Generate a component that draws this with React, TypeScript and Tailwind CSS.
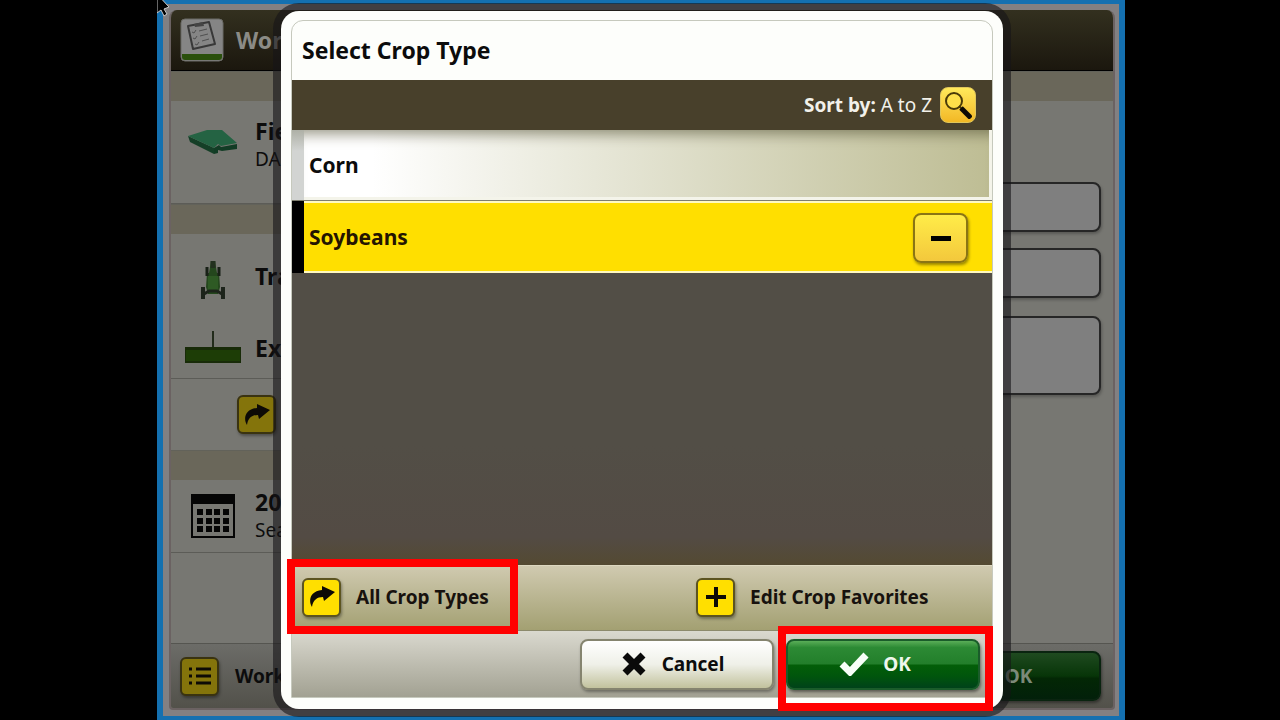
import type { ReactNode } from "react";

const PointerIcon = () => (
  <svg viewBox="0 0 14 18" className="w-[14px] h-[18px]" aria-hidden="true">
    <path d="M0 -6L12 7L7 9L10 14L7 16L4 10L0 13Z" fill="#000" stroke="#c9c9c9" strokeWidth="1" />
  </svg>
);

const ClipboardIcon = () => (
  <svg viewBox="0 0 44 44" className="w-11 h-11 shrink-0" aria-hidden="true">
    <rect x="1" y="1" width="42" height="42" rx="4" fill="#858585" stroke="#6b6b66" />
    <path d="M2 36H42V39a3 3 0 0 1-3 3H5a3 3 0 0 1-3-3Z" fill="#2a500c" />
    <path d="M8 8L29 4L35 26L13 31Z" fill="#858585" stroke="#383838" strokeWidth="2" strokeLinejoin="round" />
    <path d="M14 6L23 4L24 8L15 9Z" fill="#444" />
    <path d="M12 14l2 1 2-3M19 13l8-2M13 20l2 1 2-3M20 18l8-2M15 26l2 1 2-3M22 23l7-2" fill="none" stroke="#505050" strokeWidth="1" />
  </svg>
);

const FieldIcon = () => (
  <svg viewBox="0 0 50 26" className="w-[50px] h-[26px]" aria-hidden="true">
    <path d="M0 7L26 19V25L2 13Z" fill="#153f27" />
    <path d="M26 19L31 16L33 18L49 15V20L34 22L30 21V24L26 25Z" fill="#123c25" />
    <path d="M0 7L19 1H34L49 14L33 17L30 15L26 19Z" fill="#246343" />
  </svg>
);

const TractorIcon = () => (
  <svg viewBox="0 0 26 40" className="w-[26px] h-10" aria-hidden="true">
    <path d="M11 1h4l2 12h2l1 14-2 7H8l-2-7 1-14h2Z" fill="#24471d" />
    <path d="M13 1v7" stroke="#22301e" strokeWidth="5" />
    <path d="M7 7v9M19 7v9" stroke="#182116" strokeWidth="3" />
    <path d="M8 16h10v14H8Z" fill="#2e5a24" />
    <path d="M3 27v12M23 27v12" stroke="#1d241b" strokeWidth="4" />
    <path d="M4 34L9 31H17L22 34" fill="none" stroke="#1d241b" strokeWidth="3" />
  </svg>
);

const ImplementIcon = () => (
  <svg viewBox="0 0 56 34" className="w-14 h-[34px]" aria-hidden="true">
    <path d="M28 0V17" stroke="#222b1b" strokeWidth="2" />
    <path d="M0 16H56V32H0Z" fill="#182b08" />
    <path d="M1 19H55V30H1Z" fill="#1d3d06" />
  </svg>
);

const CalendarIcon = () => (
  <svg viewBox="0 0 44 44" className="w-11 h-11" aria-hidden="true">
    <path d="M1 1H43V43H1Z" fill="#777772" stroke="#050505" strokeWidth="2" />
    <path d="M0 0H44V10H0Z" fill="#050505" />
    <path
      d="M6 15h6v6H6zM15 15h6v6h-6zM23 15h6v6h-6zM32 15h6v6h-6zM6 24h6v6H6zM15 24h6v6h-6zM23 24h6v6h-6zM32 24h6v6h-6zM6 32h6v6H6zM15 32h6v6h-6zM23 32h6v6h-6zM32 32h6v6h-6z"
      fill="#050505"
    />
  </svg>
);

const ArrowIcon = () => (
  <svg viewBox="0 0 26 22" className="w-[26px] h-[22px]" aria-hidden="true">
    <path d="M13 0L26 6L15 15L14 11C8 11 4 14 3 21C-1 15 1 5 13 4Z" fill="#0d0a06" />
  </svg>
);

const ListIcon = () => (
  <svg viewBox="0 0 22 18" className="w-[22px] h-[18px]" aria-hidden="true">
    <path d="M7 2H22M7 9H22M7 16H22" stroke="#0d0a06" strokeWidth="3" />
    <path d="M0 2H3M0 9H3M0 16H3" stroke="#0d0a06" strokeWidth="3" />
  </svg>
);

const SearchIcon = () => (
  <svg viewBox="0 0 28 28" className="w-7 h-7" aria-hidden="true">
    <circle cx="10" cy="10" r="8" fill="#ffe04a" stroke="#4a3a08" strokeWidth="2" />
    <path d="M15 15L18 18" stroke="#4a3a08" strokeWidth="2" />
    <path d="M17 17L27 27" stroke="#0d0a06" strokeWidth="5" />
  </svg>
);

const PlusIcon = () => (
  <svg viewBox="0 0 20 20" className="w-5 h-5" aria-hidden="true">
    <path d="M10 0V20M0 10H20" stroke="#0d0a06" strokeWidth="4" />
  </svg>
);

const CrossIcon = () => (
  <svg viewBox="0 0 24 24" className="w-6 h-6" aria-hidden="true">
    <path d="M3 3L21 21M21 3L3 21" stroke="#0a0a0a" strokeWidth="7" />
  </svg>
);

const CheckIcon = () => (
  <svg viewBox="0 0 30 24" className="w-[30px] h-6" aria-hidden="true">
    <path d="M3 12L11 20L27 3" fill="none" stroke="#f8fff8" strokeWidth="7" />
  </svg>
);

const YellowTile = ({ children }: { children: ReactNode }) => (
  <span className="flex h-[39px] w-[39px] shrink-0 items-center justify-center rounded-md border-2 border-[#5c5420] bg-[#ffdf00] shadow-[1px_2px_3px_rgba(0,0,0,0.35)]">
    {children}
  </span>
);

const DimTile = ({ children }: { children: ReactNode }) => (
  <span className="flex h-[39px] w-[39px] shrink-0 items-center justify-center rounded-md border-2 border-[#3a3310] bg-[#84740b] shadow-[1px_2px_3px_rgba(0,0,0,0.35)]">
    {children}
  </span>
);

const SectionStrip = () => (
  <div className="h-[30px] shrink-0 border-t border-[#62625a] bg-[#6a675a]" />
);

// Setup page that stays visible, dimmed, behind the dialog
const SetupPage = () => (
  <div className="flex flex-1 flex-col overflow-hidden rounded-t-lg rounded-b border-x-2 border-b-2 border-[#6b6262] bg-[#777772]">
    <header className="flex h-[61px] shrink-0 items-center gap-3 border-b border-black bg-linear-to-b from-[#33301f] to-[#1b170e] px-[9px]">
      <ClipboardIcon />
      <h1 className="text-[23px] font-bold text-[#8b8b86]">Work</h1>
    </header>

    <div className="flex flex-1">
      <div className="flex w-1/3 flex-col">
        <SectionStrip />
        <div className="flex h-[103px] items-start border-b border-[#5c5c57] pt-4">
          <div className="flex w-[84px] justify-center pt-3">
            <FieldIcon />
          </div>
          <div>
            <p className="text-[23px] leading-7 font-bold">Field</p>
            <p className="text-[19px] leading-7">DAK</p>
          </div>
        </div>
        <SectionStrip />
        <div className="flex h-[72px] items-center pt-3">
          <div className="flex w-[84px] justify-center pt-2">
            <TractorIcon />
          </div>
          <p className="text-[23px] font-bold">Tractor</p>
        </div>
        <div className="flex h-[73px] items-center border-b border-[#5c5c57] pt-3">
          <div className="flex w-[84px] justify-center">
            <ImplementIcon />
          </div>
          <p className="text-[23px] font-bold">Exact</p>
        </div>
        <div className="flex h-[71px] items-center pl-[66px]">
          <DimTile>
            <ArrowIcon />
          </DimTile>
        </div>
        <SectionStrip />
        <div className="flex h-[73px] items-center border-b border-[#5c5c57]">
          <div className="flex w-[84px] justify-center">
            <CalendarIcon />
          </div>
          <div>
            <p className="text-[23px] leading-7 font-bold">20</p>
            <p className="text-[19px] leading-7">Sea</p>
          </div>
        </div>
      </div>

      <div className="flex flex-1 flex-col">
        <SectionStrip />
        <div className="flex flex-col gap-4 pt-[81px] pr-3">
          <button type="button" aria-label="Crop" className="h-[50px] rounded-lg border-2 border-[#262626] bg-[#7f7f7f] shadow-[1px_2px_3px_rgba(0,0,0,0.25)]" />
          <button type="button" aria-label="Variety" className="h-[50px] rounded-lg border-2 border-[#262626] bg-[#7f7f7f] shadow-[1px_2px_3px_rgba(0,0,0,0.25)]" />
          <button type="button" aria-label="Details" className="mt-0.5 h-[79px] rounded-lg border-2 border-[#262626] bg-[#7f7f7f] shadow-[1px_2px_3px_rgba(0,0,0,0.25)]" />
        </div>
      </div>
    </div>

    <footer className="flex h-[65px] shrink-0 items-center justify-between border-t border-[#555550] bg-linear-to-b from-[#6c6c68] to-[#52514a] pr-3 pl-[9px]">
      <button type="button" className="flex items-center gap-4">
        <DimTile>
          <ListIcon />
        </DimTile>
        <span className="text-[19px] font-bold">Work</span>
      </button>
      <button
        type="button"
        className="flex h-[50px] w-[193px] items-center justify-center rounded-lg border-2 border-[#0a2410] bg-[linear-gradient(#1f4a20,#073508_50%,#032705_55%,#02200a)] pl-7 text-[19px] font-bold text-[#7c8a7a] shadow-[1px_2px_3px_rgba(0,0,0,0.4)]"
      >
        OK
      </button>
    </footer>
  </div>
);

const CropTypeDialog = () => (
  <div
    role="dialog"
    aria-labelledby="dialog-title"
    className="flex flex-1 flex-col rounded-[18px] bg-[#fdfefb] px-[10px] pt-[9px] pb-[11px] shadow-[0_0_0_8px_rgba(22,20,24,0.6)]"
  >
    <div className="flex flex-1 flex-col rounded-t-xl border border-[#c6c9bd]">
      <h2 id="dialog-title" className="flex h-[59px] items-center pl-[10px] text-[23px] font-bold">
        Select Crop Type
      </h2>

      <div className="flex h-[50px] items-center justify-end gap-2 bg-[#48402b] pr-4 text-[#f2f1ea]">
        <p className="text-[19px]">
          <span className="font-bold">Sort by:</span> A to Z
        </p>
        <button
          type="button"
          aria-label="Search"
          className="flex h-[36px] w-[36px] items-center justify-center rounded-lg border border-[#e0c65a] bg-linear-to-b from-[#ffe95a] to-[#f2b824]"
        >
          <SearchIcon />
        </button>
      </div>

      <ul className="text-[21px] font-bold">
        <li className="flex h-[71px] border-b border-[#7d7d6e]">
          <span className="w-3 bg-linear-to-b from-[#aeb0a6] to-[#d2d4d2] to-30%" />
          <button
            type="button"
            className="flex flex-1 items-center border-r-3 border-b-3 border-[#f4f4ea] bg-linear-to-r from-white from-10% to-[#bebd94] pt-1 pl-[5px] shadow-[inset_0_16px_14px_-12px_rgba(80,78,50,0.6)]"
          >
            Corn
          </button>
        </li>
        <li className="flex h-[72px]">
          <span className="w-3 bg-black" />
          <div className="flex flex-1 items-center justify-between border-y-2 border-[#fff9c0] bg-[#ffdf00] pt-0.5 pr-6 pl-[5px] text-[#241500]">
            <span>Soybeans</span>
            <button
              type="button"
              aria-label="Remove Soybeans"
              className="flex h-[50px] w-[55px] items-center justify-center rounded-lg border-2 border-[#8a7514] bg-linear-to-b from-[#ffec48] to-[#f3c83c] shadow-[1px_2px_3px_rgba(0,0,0,0.4)]"
            >
              <span className="h-[5px] w-5 bg-black" />
            </button>
          </div>
        </li>
      </ul>

      <div className="flex-1 bg-[linear-gradient(to_top,#544a32,#534b44_28px,#524e46_120px)]" />

      <div className="flex h-[66px] items-center border-t border-[#ddd8c0] border-b border-b-[#8c8a6c] bg-linear-to-b from-[#d0cab0] to-[#a3a072] pb-0.5 text-[19px] font-bold text-[#17120e]">
        <button type="button" className="relative flex w-[394px] items-center gap-[15px] pl-[10px]">
          <YellowTile>
            <ArrowIcon />
          </YellowTile>
          All Crop Types
          <span className="pointer-events-none absolute -top-[19px] -left-[5px] z-10 h-[75px] w-[231px] border-8 border-[#ff0000]" />
        </button>
        <button type="button" className="flex items-center gap-[15px] pl-[10px]">
          <YellowTile>
            <PlusIcon />
          </YellowTile>
          Edit Crop Favorites
        </button>
      </div>

      <div className="flex h-[66px] items-center justify-end gap-3 bg-linear-to-b from-[#dad9cf] to-[#a2a192] pr-3 text-[19px] font-bold">
        <button
          type="button"
          className="flex h-[51px] w-[194px] items-center justify-center gap-4 rounded-lg border-2 border-[#85846f] bg-linear-to-b from-white via-[#eff0e8] to-[#c2c29d] pr-2 shadow-[1px_2px_3px_rgba(0,0,0,0.35)]"
        >
          <CrossIcon />
          Cancel
        </button>
        <button
          type="button"
          className="relative flex h-[51px] w-[194px] items-center justify-center gap-[14px] rounded-lg border-2 border-[#1a5c2a] bg-[linear-gradient(#5aae58,#2c8a34_14%,#237f2b_48%,#035e08_52%,#00550c_75%,#00421a)] pr-4 text-[#eef7ec] shadow-[1px_2px_3px_rgba(0,0,0,0.45)]"
        >
          <CheckIcon />
          OK
          <span className="pointer-events-none absolute -top-[15px] -right-[15px] -bottom-[23px] -left-[10px] z-10 border-8 border-[#ff0000]" />
        </button>
      </div>
    </div>
  </div>
);

const App = () => {
  return (
    <div className="flex min-h-screen bg-black pr-[155px] pl-[157px] font-['Noto_Sans','Open_Sans',sans-serif] text-[#0c0c0c]">
      <div className="relative flex flex-1 flex-col border-x-6 border-y-4 border-[#1470b0] bg-[#828082] pt-[6px] pr-1 pb-[6px] pl-[6px]">
        <SetupPage />
        {/* Modal layer, sized against the window frame */}
        <div className="absolute inset-0 flex pt-[7px] pr-[116px] pb-[7px] pl-[118px]">
          <CropTypeDialog />
        </div>
        <div className="absolute -top-1 -left-[6px]">
          <PointerIcon />
        </div>
      </div>
    </div>
  );
};

export default App;
